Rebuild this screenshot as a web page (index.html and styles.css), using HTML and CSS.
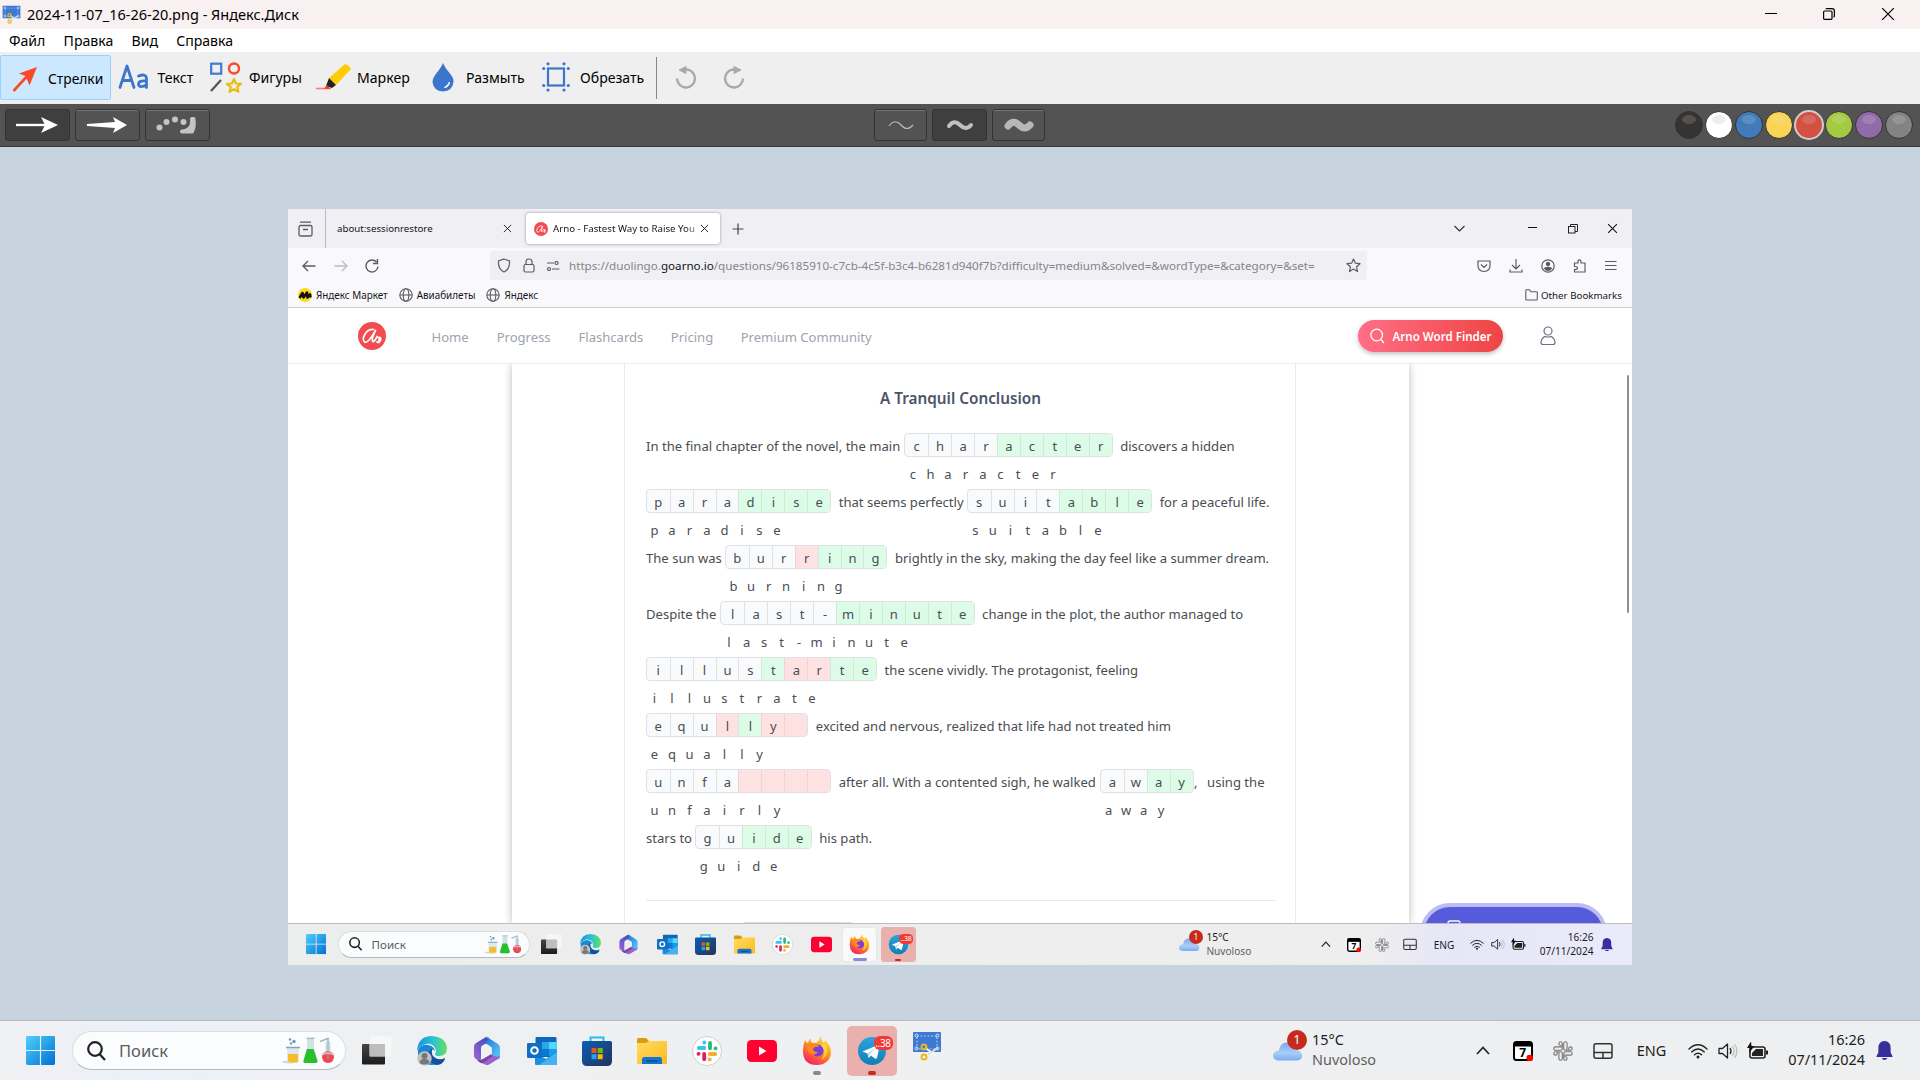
FILE: index.html
```html
<!DOCTYPE html>
<html lang="ru">
<head>
<meta charset="utf-8">
<title>2024-11-07_16-26-20.png - Яндекс.Диск</title>
<link rel="stylesheet" href="styles.css">
</head>
<body>
<svg class="defs" width="0" height="0">
  <defs>
    <linearGradient id="gWin" x1="0" y1="0" x2="1" y2="1"><stop offset="0" stop-color="#4fd0fb"/><stop offset="1" stop-color="#0070d4"/></linearGradient>
    <linearGradient id="gEdge" x1="0" y1="0" x2="1" y2="0"><stop offset="0" stop-color="#1496dc"/><stop offset=".55" stop-color="#2cc3d4"/><stop offset="1" stop-color="#66e05a"/></linearGradient>
    <linearGradient id="gTv" x1="0" y1="0" x2="0" y2="1"><stop offset="0" stop-color="#444"/><stop offset="1" stop-color="#1c1c1c"/></linearGradient>
    <linearGradient id="gFold" x1="0" y1="0" x2="1" y2="1"><stop offset="0" stop-color="#ffdc62"/><stop offset="1" stop-color="#fbbb1e"/></linearGradient>
    <linearGradient id="gStore" x1="0" y1="0" x2="1" y2="1"><stop offset="0" stop-color="#0a5fb4"/><stop offset="1" stop-color="#24325c"/></linearGradient>
    <linearGradient id="gFox" x1=".8" y1="0" x2=".2" y2="1"><stop offset="0" stop-color="#ffe443"/><stop offset=".45" stop-color="#ff9020"/><stop offset="1" stop-color="#f5156c"/></linearGradient>
    <linearGradient id="gTg" x1="0" y1="0" x2="0" y2="1"><stop offset="0" stop-color="#2ba4dc"/><stop offset="1" stop-color="#127fb8"/></linearGradient>
    <linearGradient id="gCloud" x1="0" y1="0" x2="0" y2="1"><stop offset="0" stop-color="#7ea6f0"/><stop offset=".6" stop-color="#a9cdf8"/><stop offset="1" stop-color="#7eaaf0"/></linearGradient>
    <linearGradient id="g365a" x1="0" y1="1" x2="1" y2="0"><stop offset="0" stop-color="#a566dc"/><stop offset="1" stop-color="#3a4bb4"/></linearGradient>
    <linearGradient id="g365b" x1="0" y1="0" x2="1" y2="1"><stop offset="0" stop-color="#1c6fd8"/><stop offset="1" stop-color="#5fd0fa"/></linearGradient>

    <symbol id="win" viewBox="0 0 30 30"><path fill="url(#gWin)" d="M1.500 0H14.400V14.400H0V1.500Q0 0 1.500 0zM15.600 0H28.500Q30 0 30 1.500V14.400H15.600zM0 15.600H14.400V30H1.500Q0 30 0 28.500zM15.600 15.600H30V28.500Q30 30 28.500 30H15.600z"/></symbol>
    <symbol id="flasks" viewBox="0 0 52 28">
      <ellipse cx="8" cy="25" rx="8" ry="1.500" fill="#c9d3da"/>
      <path d="M5 10h12v14q0 2-2 2H7q-2 0-2-2z" fill="#dbe9ef"/><path d="M6 17h10v7q0 1.500-2 1.500H8q-2 0-2-1.500z" fill="#f5bd2e"/><path d="M4 10.500h14" stroke="#7aa5ba" stroke-width="1.500"/>
      <g fill="#6a9bb4"><circle cx="8" cy="2.500" r="1.200"/><circle cx="12" cy="4.500" r="1.700"/><circle cx="9" cy="6.500" r="1.200"/></g>
      <path d="M25 1h7v10l4 13q0 2-2 2H23q-2 0-2-2l4-13z" fill="#cfe3e6"/><path d="M25 12h6.500l4 12q0 2-2 2H23q-2 0-1.500-2z" fill="#27c02c"/><path d="M24.500 1.200h8" stroke="#88aebc"/>
      <path d="M38 4.500l8-3v7" fill="none" stroke="#9bbccb" stroke-width="1.600"/><path d="M43.500 5h5v9h-5z" fill="#cadde5"/><circle cx="46" cy="20" r="6" fill="#f04652"/><path d="M40.500 17.500q5-3 11 0" stroke="#e9b6bd" stroke-width="2" fill="none"/><path d="M46 5v17" stroke="#8fb2c2"/>
    </symbol>
    <symbol id="taskview" viewBox="0 0 30 30"><rect x="0" y="8" width="23" height="20.500" rx="1" fill="url(#gTv)"/><rect x="7.500" y=".5" width="22" height="20" rx="1" fill="#f8f8f8" fill-opacity=".82"/><path d="M7.500 8H23V20.500H7.500z" fill="#b8b8b8" fill-opacity=".8"/></symbol>
    <symbol id="edge" viewBox="0 0 30 30">
      <path fill="#0f539f" d="M12 10Q5 17 12 25 17 31 24 28 28 25 28 22 22 25 17 21 13 17 16 12z"/>
      <path fill="#1b86d6" d="M1 14Q4 8 11 9 17 10 18 15 14 11 12 16 10 23 17 29 4 30 1 19z"/>
      <path fill="url(#gEdge)" d="M0 15Q1 0 15 0 29 1 30 12 30 20 22 20 18 20 18 18 20 15 18 12 15 7 9 8 3 9 0 15z"/>
      <circle cx="7.500" cy="22.500" r="7.200" fill="#c4c2c0"/><circle cx="7.500" cy="20" r="3" fill="#777"/><path d="M2.500 27q0-4 5-4t5 4q-5 3-10 0z" fill="#777"/>
    </symbol>
    <symbol id="m365" viewBox="0 0 30 30">
      <path fill="url(#g365a)" d="M14 1L4 7Q2 8 2 11v9q0 2 2 3l6 4q-2-2-1-5V12q0-2 2-3l6-3q1-3-3-5z"/>
      <path fill="url(#g365b)" d="M14 1q3 0 4 2l8 5q2 1 2 4v9q0 3-5 2l-3-2v-8q0-2-2-3l-5-3q5-3 1-7z"/>
      <path fill="#9b62cf" d="M28 19q0 3-2 4l-8 5q-3 2-6 0l-7-4q3 1 6-1l8-5 3 2q4 2 6-1z"/><path fill="#7a43a6" d="M5 24q3 1 6-1l8-4 2 1-10 7q-2 1-6-3z"/>
    </symbol>
    <symbol id="outlook" viewBox="0 0 30 30">
      <rect x="8.500" y="1" width="21" height="20" rx="1" fill="#1066b8"/><path fill="#28a8ea" d="M15 6h7v7h-7z"/><path fill="#50d9ff" d="M22 6h7.500v7H22z"/><path fill="#0a78d4" d="M15 13h7v7h-7z"/><path fill="#1a9be6" d="M22 13h7.500v7H22z"/>
      <path fill="#1a8ee2" d="M8 17l11 6 11-8v13q0 1-1 1H9q-1 0-1-1z"/><path fill="#45b3f0" d="M30 16v12q0 1-1 1H12z"/>
      <rect x="0" y="7" width="15" height="15" rx="1.200" fill="#0f6fc4"/><circle cx="7.500" cy="14.500" r="3.300" fill="none" stroke="#fff" stroke-width="2"/>
    </symbol>
    <symbol id="store" viewBox="0 0 30 30"><path d="M8.500 6V1.500h13V6" fill="none" stroke="#27bdf0" stroke-width="2"/><path fill="url(#gStore)" d="M1.500 5h27q1.500 0 1.500 1.500V25q0 5-5 5H5q-5 0-5-5V6.500Q0 5 1.500 5z"/><path fill="#f25022" d="M9.500 12h5v5h-5z"/><path fill="#7fba00" d="M15.700 12h5v5h-5z"/><path fill="#1aa7ee" d="M9.500 18.200h5v5h-5z"/><path fill="#ffb900" d="M15.700 18.200h5v5h-5z"/></symbol>
    <symbol id="folder" viewBox="0 0 30 30"><path fill="#dd9a0c" d="M0 3.500Q0 2 1.500 2H9l3.500 3.500V10H0z"/><path fill="url(#gFold)" d="M0 7h9l3-2h18v23H0z"/><path fill="#1373cf" d="M5 28v-4.500Q5 21 7.500 21h15q2.500 0 2.500 2.500V28z"/><path d="M10 25h10" stroke="#084d9a" stroke-width="1.500" stroke-linecap="round"/></symbol>
    <symbol id="slack" viewBox="0 0 30 30"><circle cx="15" cy="15" r="14.500" fill="#fff" stroke="#cfcfcf"/>
      <g stroke-width="3.800" stroke-linecap="round" fill="none"><path d="M6.800 12h5.500M12.300 6.400v.1" stroke="#36c5f0"/><path d="M18 6.800v5.500M23.500 12.300h.1" stroke="#2eb67d"/><path d="M17.800 18h5.500M17.800 23.500v.1" stroke="#ecb22e"/><path d="M12.200 17.800v5.500M6.500 17.800h.1" stroke="#e01e5a"/></g></symbol>
    <symbol id="youtube" viewBox="0 0 30 30"><rect y="4" width="30" height="22" rx="4.500" fill="#ff0033"/><path d="M12 10.500v9l7.500-4.500z" fill="#fff"/></symbol>
    <symbol id="firefox" viewBox="0 0 30 30">
      <path fill="url(#gFox)" d="M19 1q0 3 3 6 1-1 1-3 6 6 6 12 0 6-4 9.500T15 29Q1 29 1 15 1 9 3 4q1 3 3 3Q7 3 9 3q-1 4 3 4 5 0 6-6z"/>
      <circle cx="15.500" cy="14.500" r="6" fill="#7a3de0"/><path fill="#ff8a1c" d="M5 8q3-2 6-1 4 0 6 4-5-1-6 2 0 3 5 3-3 4-7 2-5-3-4-10z"/><path fill="#ffdf3e" d="M22 7q4 4 3 9-1 6-6 8 4-5 3-10-1-3-3-4z" opacity=".8"/>
    </symbol>
    <symbol id="telegram" viewBox="0 0 30 30"><circle cx="15" cy="15" r="14" fill="url(#gTg)"/><path fill="#fff" d="M5.500 15.500L21 9q2-.5 1.500 2l-2.500 10.500q-.6 2-2 1L14 19.500l-2.500 2.500-1-4.500z"/><path fill="#b5d7ea" d="M10.500 17.500l8.500-6-6.500 7-1 3.500z"/></symbol>
    <symbol id="yascreen" viewBox="0 0 30 30"><rect x="1" y="1" width="28" height="20" rx="1" fill="#3c78d4"/><path d="M5 5h20v13H5z" fill="none" stroke="#a8c8f4" stroke-dasharray="2 1.500"/><g fill="none" stroke="#dceafc"><circle cx="4.500" cy="4.500" r="1.500"/><circle cx="25.500" cy="4.500" r="1.500"/><circle cx="4.500" cy="17.500" r="1.500"/><circle cx="25.500" cy="17.500" r="1.500"/></g><path d="M13 16.500L25 26M14 25l11.500-8" stroke="#f5f5f5" stroke-width="2"/><path d="M16 23.500l9.500-6.500" stroke="#aaa" stroke-width=".6"/><g fill="none" stroke="#e6b91c" stroke-width="2"><circle cx="12" cy="16" r="2.500"/><circle cx="12" cy="26" r="2.500"/></g></symbol>
    <symbol id="cloud" viewBox="0 0 32 24"><path fill="url(#gCloud)" d="M7 22q-7 0-7-5 0-5 6-5Q8 2 16 3q7 1 8 8 7 1 7 6 0 5-6 5z"/></symbol>
    <symbol id="cal" viewBox="0 0 20 20"><rect x="1" y="1" width="18" height="18" rx="2.500" fill="#fff" stroke="#000" stroke-width="2"/><path d="M1 1h18v4.500H1z"/><text x="9.800" y="15.800" font-size="12" font-weight="700" text-anchor="middle" font-family="Noto Sans">7</text><circle cx="16.700" cy="17" r="3.300" fill="red"/></symbol>
    <symbol id="slackgray" viewBox="0 0 20 20"><g fill="none" stroke="#777" stroke-width="1.100"><path d="M9.300 6.300V2.500q0-1.700-1.700-1.700T5.900 2.500t1.700 1.700h1.700M6.300 10.700H2.500Q.8 10.700.8 12.400t1.700 1.700 1.700-1.700v-1.700M10.700 13.700v3.800q0 1.700 1.700 1.700t1.700-1.700-1.700-1.700h-1.700M13.700 9.300h3.800q1.700 0 1.700-1.700t-1.700-1.700-1.700 1.700v1.700"/><rect x="10.700" y=".8" width="3.400" height="8.500" rx="1.700"/><rect x="5.900" y="10.700" width="3.400" height="8.500" rx="1.700"/><rect x=".8" y="5.900" width="8.500" height="3.400" rx="1.700"/><rect x="10.700" y="10.700" width="8.500" height="3.400" rx="1.700"/></g></symbol>
    <symbol id="touchpad" viewBox="0 0 20 18"><path d="M3 1.700h14q2 0 2 2v10.600q0 2-2 2H3q-2 0-2-2V3.700q0-2 2-2zM1 10.500h18M10 10.500v6" fill="none" stroke="#333" stroke-width="1.500"/></symbol>
    <symbol id="wifi" viewBox="0 0 20 16"><g fill="none" stroke="#222" stroke-width="1.400" stroke-linecap="round"><path d="M1 6q9-8.500 18 0M3.700 8.900q6.300-5.800 12.600 0M6.500 11.700q3.500-3 7 0"/></g><circle cx="10" cy="14" r="1.500" fill="#222"/></symbol>
    <symbol id="speaker" viewBox="0 0 20 18"><path d="M1 6.500h3.500L9.500 2v14l-5-4.500H1z" fill="none" stroke="#222" stroke-width="1.300" stroke-linejoin="round"/><path d="M12 6q2 3 0 6" fill="none" stroke="#222" stroke-width="1.300"/><path d="M14.300 4q3.700 5 0 10M16.500 2q5 7 0 14" fill="none" stroke="#bbb" stroke-width="1.200"/></symbol>
    <symbol id="battery" viewBox="0 0 21 18"><rect x="3" y="5" width="15" height="11" rx="2" fill="none" stroke="#222" stroke-width="1.600"/><path d="M5 14v-3l4-4h7v7zM19 8.500h2v4h-2z" fill="#222"/><path d="M4-.5L0 6h3l-1 5 5.500-7H4.500z" fill="#111"/></symbol>
    <symbol id="bell" viewBox="0 0 18 20"><path fill="#382f9c" d="M9 0Q15.500.5 15.500 7v5L17.500 16v1H.5v-1L2.500 12V7Q2.500.5 9 0zM6 18h6q-1 2-3 2t-3-2z"/></symbol>
    <symbol id="arno" viewBox="0 0 28 28"><circle cx="14" cy="14" r="14" fill="#f24b50"/><path d="M15.500 7.500Q10 7 6.800 12.500T7 20.300Q10.500 21 17.500 8.500 13.500 16 14.500 19q1.500 2.200 4.500-4.500 1 1.800 3 1-1.800 3-1 5M22 15.500q1.800 1.500-.3 4-1.800 1.800-2.700.3" fill="none" stroke="#fff" stroke-width="1.700" stroke-linecap="round" stroke-linejoin="round"/></symbol>
    <symbol id="globe" viewBox="0 0 14 14"><g fill="none" stroke="#5b5b66" stroke-width="1.100"><circle cx="7" cy="7" r="6.200"/><ellipse cx="7" cy="7" rx="2.800" ry="6.200"/><path d="M.8 7h12.400"/></g></symbol>
    <symbol id="x" viewBox="0 0 10 10"><path d="M1 1l8 8M9 1L1 9" stroke="currentColor" fill="none"/></symbol>
  </defs>
</svg>

<header class="titlebar">
  <svg class="title-icon" viewBox="0 0 30 30"><use href="#yascreen"/></svg>
  <span class="title-text">2024-11-07_16-26-20.png - Яндекс.Диск</span>
  <div class="win-buttons">
    <svg width="12" height="12" viewBox="0 0 12 12"><path d="M0 5.500h12" stroke="#000"/></svg>
    <svg width="12" height="12" viewBox="0 0 12 12" fill="none" stroke="#000" stroke-width="1.200"><rect x=".6" y="3" width="8.400" height="8.400" rx="1"/><path d="M3 1.200Q3 .6 4 .6h5Q11.400.6 11.400 3v5q0 1-1 1"/></svg>
    <svg width="12" height="12" viewBox="0 0 12 12"><path d="M0 0l12 12M12 0L0 12" stroke="#000" stroke-width="1.200"/></svg>
  </div>
</header>
<nav class="menubar"><span>Файл</span><span>Правка</span><span>Вид</span><span>Справка</span></nav>

<div class="toolbar">
  <div class="tool tool-arrows">
    <svg width="28" height="28" viewBox="0 0 28 28"><path d="M2.500 26L19 8" stroke="#fa4a28" stroke-width="2.600"/><path d="M26 2L8 8.500l6.500 2.500 4 9.500z" fill="#fa4a28"/></svg><span>Стрелки</span>
  </div>
  <div class="tool tool-text">
    <svg width="31" height="28" viewBox="0 0 31 28"><g fill="none" stroke="#3c76cc" stroke-width="2.800" stroke-linecap="round" stroke-linejoin="round"><path d="M2 24.500L9 3l7 21.500M4.500 17.500h9"/><path d="M20.500 13q8-3 8 3v8.500M28.500 18q-8-1-8 3.500 1 4 8 .5"/></g></svg><span>Текст</span>
  </div>
  <div class="tool tool-shapes">
    <svg width="33" height="32" viewBox="0 0 33 32"><g fill="none"><rect x="2.200" y="2.700" width="10" height="10" stroke="#3f7bd4" stroke-width="2.200"/><circle cx="25" cy="7.500" r="5" stroke="#fa4a28" stroke-width="2.400"/><path d="M2 30L12 19" stroke="#555" stroke-width="2.300"/><path d="M25 18l2 4.500 5 .4-3.800 3.200 1.200 4.700L25 28.200l-4.400 2.600 1.200-4.700L18 22.900l5-.4z" stroke="#eabb10" stroke-width="2.200" stroke-linejoin="round"/></g></svg><span>Фигуры</span>
  </div>
  <div class="tool tool-marker">
    <svg width="37" height="28" viewBox="0 0 37 28"><path d="M1 25.500h15" stroke="#f77f72" stroke-width="1.600"/><path d="M30 1q4 1 6 5L21 22l-7-7z" fill="#ffcb05"/><path d="M14 15l7 7-4 3-6-2z" fill="#222"/><path d="M11.500 21.500l3.500 4-5.500.5z" fill="#f03a24"/></svg><span>Маркер</span>
  </div>
  <div class="tool tool-blur">
    <svg width="22" height="29" viewBox="0 0 22 29"><path d="M11 0q2 5 6.500 10T21.500 19q-1 9-10.500 9.500Q1.500 28 .5 19 .5 15 5 9.500T11 0z" fill="#3c76cc"/><path d="M17.500 19q-.5 5-5 5.500 3-1.500 5-5.500z" fill="#fff" stroke="#fff"/></svg><span>Размыть</span>
  </div>
  <div class="tool tool-crop">
    <svg width="28" height="30" viewBox="0 0 28 30"><rect x="6" y="6.500" width="16" height="17" fill="none" stroke="#3c76cc" stroke-width="2.200"/><g fill="#3c76cc"><circle cx="6" cy="1.800" r="1.600"/><circle cx="22" cy="1.800" r="1.600"/><circle cx="6" cy="28" r="1.600"/><circle cx="22" cy="28" r="1.600"/><circle cx="1.700" cy="6.500" r="1.600"/><circle cx="26.300" cy="6.500" r="1.600"/><circle cx="1.700" cy="23.500" r="1.600"/><circle cx="26.300" cy="23.500" r="1.600"/></g></svg><span>Обрезать</span>
  </div>
  <div class="tool-sep"></div>
  <svg class="history" width="22" height="24" viewBox="0 0 22 24"><path d="M2 12.500a9 9 0 1 0 10-9H10" fill="none" stroke="#a9a9a9" stroke-width="2.400"/><path d="M4 4L11 .5v7z" fill="#a9a9a9" stroke="#a9a9a9"/></svg>
  <svg class="history" width="22" height="24" viewBox="0 0 22 24"><path d="M20 12.500a9 9 0 1 1-10-9h2" fill="none" stroke="#a9a9a9" stroke-width="2.400"/><path d="M18 4L11 .5v7z" fill="#a9a9a9" stroke="#a9a9a9"/></svg>
</div>

<div class="options">
  <div class="arrow-kinds">
    <div class="opt active"><svg width="44" height="18" viewBox="0 0 44 18"><path d="M1 9h32" stroke="#fff" stroke-width="2.400"/><path d="M26 1l17 8-17 8 4-8z" fill="#fff"/></svg></div>
    <div class="opt"><svg width="44" height="18" viewBox="0 0 44 18"><path d="M2 8l28-2-2-5 14 8-14 8 2-5-28-2z" fill="#fff"/></svg></div>
    <div class="opt"><svg width="44" height="18" viewBox="0 0 44 18"><g fill="#c4c4c4"><circle cx="4.500" cy="11.500" r="3"/><circle cx="11.500" cy="6" r="3"/><circle cx="20" cy="3.500" r="3"/><circle cx="28.500" cy="6" r="3"/><path d="M35 2.500Q35 1 37 1h2q1.500 0 1.500 2 1 8-1.500 13-.5 1.500-2 1.500H27q-2 0-2-2t2-2 4-1q5-2 4-10z"/></g></svg></div>
  </div>
  <div class="stroke-kinds">
    <div class="opt"><svg width="32" height="16" viewBox="0 0 32 16"><path d="M4 9q6-8 12-1t12 0" fill="none" stroke="#bbb" stroke-width="1.200"/></svg></div>
    <div class="opt active"><svg width="32" height="16" viewBox="0 0 32 16"><path d="M5 9q5-7 11-1t11 0" fill="none" stroke="#c0c0c0" stroke-width="4" stroke-linecap="round"/></svg></div>
    <div class="opt"><svg width="32" height="16" viewBox="0 0 32 16"><path d="M5 9q5-7 11-1t11 0" fill="none" stroke="#b8b8b8" stroke-width="7" stroke-linecap="round"/></svg></div>
  </div>
  <div class="palette"><i class="c-black"></i><i class="c-white"></i><i class="c-blue"></i><i class="c-yellow"></i><i class="c-red"></i><i class="c-green"></i><i class="c-purple"></i><i class="c-gray"></i></div>
</div>

<main class="canvas">
  <section class="shot">
    <div class="tabs">
      <div class="recent"><svg width="15" height="16" viewBox="0 0 15 16" fill="none" stroke="#5b5b66" stroke-width="1.300"><rect x="1" y="4.500" width="13" height="10.500" rx="1.500"/><path d="M2 1.200h11M5 8.500h5"/></svg></div>
      <div class="tab tab-idle"><span>about:sessionrestore</span><svg width="9" height="9"><use href="#x"/></svg></div>
      <div class="tab tab-active"><svg width="14" height="14"><use href="#arno"/></svg><span class="tab-title">Arno - Fastest Way to Raise You</span><svg width="9" height="9"><use href="#x"/></svg></div>
      <svg class="newtab" width="12" height="12" viewBox="0 0 12 12"><path d="M6 .5v11M.5 6h11" stroke="#444" stroke-width="1.200"/></svg>
      <div class="shot-win">
        <svg width="11" height="11" viewBox="0 0 11 11"><path d="M.5 3l5 5 5-5" fill="none" stroke="#333" stroke-width="1.200"/></svg>
        <svg width="9" height="9" viewBox="0 0 9 9"><path d="M0 3.500h9" stroke="#111"/></svg>
        <svg width="10" height="10" viewBox="0 0 10 10" fill="none" stroke="#222"><rect x=".5" y="2.500" width="6.500" height="6.500"/><path d="M2.500 2.500v-2H9.500v7H7"/></svg>
        <svg width="11" height="11"><use href="#x"/></svg>
      </div>
    </div>
    <div class="navbar">
      <div class="nav-left">
        <svg width="14" height="12" viewBox="0 0 14 12" fill="none" stroke="#5b5b66" stroke-width="1.400"><path d="M13.500 6H1M6 1L1 6l5 5"/></svg>
        <svg width="14" height="12" viewBox="0 0 14 12" fill="none" stroke="#bbb" stroke-width="1.300"><path d="M.5 6H13M8 1l5 5-5 5"/></svg>
        <svg width="14" height="14" viewBox="0 0 14 14" fill="none" stroke="#5b5b66" stroke-width="1.400"><path d="M11.500 3A6 6 0 1 0 13 7.500M12.500 0v4.500H8"/></svg>
      </div>
      <div class="urlbar">
        <svg width="14" height="15" viewBox="0 0 14 15" fill="none" stroke="#5b5b66" stroke-width="1.200"><path d="M7 1l5.500 2q.7 8-5.500 11Q.8 11 1.500 3z"/></svg>
        <svg width="12" height="15" viewBox="0 0 12 15" fill="none" stroke="#5b5b66" stroke-width="1.200"><rect x="1" y="6.500" width="10" height="7.500" rx="1.500"/><path d="M3 6.500V4q0-3 3-3t3 3v2.500"/></svg>
        <svg width="14" height="10" viewBox="0 0 14 10" fill="none" stroke="#5b5b66" stroke-width="1.200"><path d="M1 2h7M6 8h7.500"/><circle cx="10.500" cy="2" r="1.500"/><circle cx="3" cy="8" r="1.500"/></svg>
        <span class="url">https://duolingo.<b>goarno.io</b>/questions/96185910-c7cb-4c5f-b3c4-b6281d940f7b?difficulty=medium&amp;solved=&amp;wordType=&amp;category=&amp;set=</span>
        <svg class="star" width="15" height="15" viewBox="0 0 15 15" fill="none" stroke="#5b5b66" stroke-width="1.200" stroke-linejoin="round"><path d="M7.500 1l1.900 4.200 4.600.5-3.400 3.100.9 4.700-4-2.400-4 2.400.9-4.700L1 5.700l4.600-.5z"/></svg>
      </div>
      <div class="nav-right">
        <svg width="14" height="14" viewBox="0 0 14 14" fill="none" stroke="#5b5b66" stroke-width="1.200"><path d="M1 2h12v4.500q0 5.500-6 6-6-.5-6-6zM4 5.500l3 3 3-3"/></svg>
        <svg width="14" height="14" viewBox="0 0 14 14" fill="none" stroke="#5b5b66" stroke-width="1.200"><path d="M7 0v9.500M3 6l4 4 4-4M1 10.500V13h12v-2.500"/></svg>
        <svg width="14" height="14" viewBox="0 0 14 14"><circle cx="7" cy="7" r="6.200" fill="none" stroke="#5b5b66" stroke-width="1.200"/><circle cx="7" cy="5" r="2.200" fill="#5b5b66"/><path d="M3 9.500q0-1.800 4-1.800t4 1.800Q9.500 12 7 12T3 9.500z" fill="#5b5b66"/></svg>
        <svg width="14" height="14" viewBox="0 0 14 14" fill="none" stroke="#5b5b66" stroke-width="1.200"><path d="M1.500 4h3.500V2.500q0-1.700 1.500-1.700T8 2.500V4h4v9H1.500v-2.500q3 0 3-1.500t-3-1.500z"/></svg>
        <svg width="12" height="12" viewBox="0 0 12 12"><path d="M0 1.500h11.500M0 5.500h11.500M0 9.500h11.500" stroke="#5b5b66" stroke-width="1.200"/></svg>
      </div>
    </div>
    <div class="bookmarks">
      <svg width="14" height="14" viewBox="0 0 14 14"><circle cx="7" cy="7" r="7" fill="#fcdb1c"/><path d="M1.500 10L4.500 5l1 4.500 3.500-5 .5 5 2.500-3 .5 3" fill="none" stroke="#111" stroke-width="2.600" stroke-linejoin="round"/></svg><span class="bm1">Яндекс Маркет</span>
      <svg width="14" height="14"><use href="#globe"/></svg><span class="bm2">Авиабилеты</span>
      <svg width="14" height="14"><use href="#globe"/></svg><span>Яндекс</span>
      <div class="other"><svg width="13" height="12" viewBox="0 0 13 12" fill="none" stroke="#5b5b66" stroke-width="1.100"><path d="M.8 10V1.500Q.8.800 1.500.8h3l1.500 2h5.500q.8 0 .8.700V10q0 1-1 1h-9.500q-1 0-1-1z"/></svg><span>Other Bookmarks</span></div>
    </div>
    <div class="site-head">
      <svg class="logo" width="28" height="28"><use href="#arno"/></svg>
      <span class="n1">Home</span><span class="n2">Progress</span><span class="n3">Flashcards</span><span class="n4">Pricing</span><span>Premium Community</span>
      <div class="finder"><svg width="15" height="16" viewBox="0 0 15 16" fill="none" stroke="#fff" stroke-width="1.300"><circle cx="6.700" cy="7" r="5.800"/><path d="M11 11.500l3 3.500"/></svg><span>Arno Word Finder</span></div>
      <svg class="user" width="16" height="20" viewBox="0 0 16 20" fill="none" stroke="#6b7280" stroke-width="1.200"><circle cx="8" cy="5" r="4"/><path d="M4.500 10.500q-3.500 2.500-3.500 6 0 2 2 2h10q2 0 2-2 0-3.500-3.500-6-3.500 1-7 0z"/></svg>
    </div>
    <div class="page">
      <div class="sheet">
        <div class="card">
          <h1>A Tranquil Conclusion</h1>
          <div class="line"><span>In the final chapter of the novel, the main</span><div class="word"><div class="cells"><i>c</i><i>h</i><i>a</i><i>r</i><i class="g">a</i><i class="g">c</i><i class="g">t</i><i class="g">e</i><i class="g">r</i></div><div class="answer"><i>c</i><i>h</i><i>a</i><i>r</i><i>a</i><i>c</i><i>t</i><i>e</i><i>r</i></div></div><span>discovers a hidden</span></div>
          <div class="line"><div class="word"><div class="cells"><i>p</i><i>a</i><i>r</i><i>a</i><i class="g">d</i><i class="g">i</i><i class="g">s</i><i class="g">e</i></div><div class="answer"><i>p</i><i>a</i><i>r</i><i>a</i><i>d</i><i>i</i><i>s</i><i>e</i></div></div><span>that seems perfectly</span><div class="word tight"><div class="cells"><i>s</i><i>u</i><i>i</i><i>t</i><i class="g">a</i><i class="g">b</i><i class="g">l</i><i class="g">e</i></div><div class="answer"><i>s</i><i>u</i><i>i</i><i>t</i><i>a</i><i>b</i><i>l</i><i>e</i></div></div><span>for a peaceful life.</span></div>
          <div class="line"><span>The sun was</span><div class="word tight"><div class="cells"><i>b</i><i>u</i><i>r</i><i class="r">r</i><i class="g">i</i><i class="g">n</i><i class="g">g</i></div><div class="answer"><i>b</i><i>u</i><i>r</i><i>n</i><i>i</i><i>n</i><i>g</i></div></div><span>brightly in the sky, making the day feel like a summer dream.</span></div>
          <div class="line"><span>Despite the</span><div class="word"><div class="cells"><i>l</i><i>a</i><i>s</i><i>t</i><i>-</i><i class="g">m</i><i class="g">i</i><i class="g">n</i><i class="g">u</i><i class="g">t</i><i class="g">e</i></div><div class="answer"><i>l</i><i>a</i><i>s</i><i>t</i><i>-</i><i>m</i><i>i</i><i>n</i><i>u</i><i>t</i><i>e</i></div></div><span>change in the plot, the author managed to</span></div>
          <div class="line"><div class="word"><div class="cells"><i>i</i><i>l</i><i>l</i><i>u</i><i>s</i><i class="g">t</i><i class="r">a</i><i class="r">r</i><i class="g">t</i><i class="g">e</i></div><div class="answer"><i>i</i><i>l</i><i>l</i><i>u</i><i>s</i><i>t</i><i>r</i><i>a</i><i>t</i><i>e</i></div></div><span>the scene vividly. The protagonist, feeling</span></div>
          <div class="line"><div class="word"><div class="cells"><i>e</i><i>q</i><i>u</i><i class="r">l</i><i class="g">l</i><i class="r">y</i><i class="r"></i></div><div class="answer"><i>e</i><i>q</i><i>u</i><i>a</i><i>l</i><i>l</i><i>y</i></div></div><span>excited and nervous, realized that life had not treated him</span></div>
          <div class="line"><div class="word"><div class="cells"><i>u</i><i>n</i><i>f</i><i>a</i><i class="r"></i><i class="r"></i><i class="r"></i><i class="r"></i></div><div class="answer"><i>u</i><i>n</i><i>f</i><i>a</i><i>i</i><i>r</i><i>l</i><i>y</i></div></div><span>after all. With a contented sigh, he walked</span><div class="word"><div class="cells"><i>a</i><i>w</i><i class="g">a</i><i class="g">y</i></div><div class="answer"><i>a</i><i>w</i><i>a</i><i>y</i></div></div><span class="comma">,</span><span>using the</span></div>
          <div class="line"><span>stars to</span><div class="word tight"><div class="cells"><i>g</i><i>u</i><i class="g">i</i><i class="g">d</i><i class="g">e</i></div><div class="answer"><i>g</i><i>u</i><i>i</i><i>d</i><i>e</i></div></div><span>his path.</span></div>
          <hr>
          <div class="stub"></div>
        </div>
      </div>
      <div class="scroll"></div>
      <div class="cta"><svg width="14" height="12" viewBox="0 0 14 12"><path d="M1 10V3q0-2 2-2h8q2 0 2 2v7" fill="none" stroke="#fff" stroke-width="1.300"/></svg></div>
    </div>
    <footer class="taskbar inner">
      <svg class="start"><use href="#win"/></svg>
      <div class="search"><svg width="19" height="20" viewBox="0 0 19 20" fill="none" stroke="#222" stroke-width="2.200"><circle cx="8" cy="8" r="6.800"/><path d="M12.500 13l5.500 6"/></svg><span>Поиск</span><svg class="flasks"><use href="#flasks"/></svg></div>
      <div class="apps">
        <div class="app"><svg><use href="#taskview"/></svg></div><div class="app"><svg><use href="#edge"/></svg></div><div class="app"><svg><use href="#m365"/></svg></div><div class="app"><svg><use href="#outlook"/></svg></div><div class="app"><svg><use href="#store"/></svg></div><div class="app"><svg><use href="#folder"/></svg></div><div class="app"><svg><use href="#slack"/></svg></div><div class="app"><svg><use href="#youtube"/></svg></div><div class="app focus"><svg><use href="#firefox"/></svg><b class="mark"></b></div><div class="app alert"><svg><use href="#telegram"/></svg><b class="count">..38</b><b class="mark"></b></div>
      </div>
      <div class="tray">
        <div class="weather"><svg class="cl"><use href="#cloud"/></svg><b class="one">1</b><p>15°C<br><em>Nuvoloso</em></p></div>
        <div class="t40"><svg width="14" height="9" viewBox="0 0 14 9"><path d="M1 8l6-6.500L13 8" fill="none" stroke="#222" stroke-width="1.700"/></svg></div>
        <div class="t40"><svg width="20" height="20"><use href="#cal"/></svg></div><div class="t40"><svg width="20" height="20"><use href="#slackgray"/></svg></div><div class="t40"><svg width="20" height="18"><use href="#touchpad"/></svg></div>
        <div class="lang">ENG</div><div class="wifi"><svg width="20" height="16"><use href="#wifi"/></svg></div><div class="vol"><svg width="20" height="18"><use href="#speaker"/></svg></div><div class="bat"><svg width="21" height="18"><use href="#battery"/></svg></div>
        <div class="clock">16:26<br>07/11/2024</div><div class="bell"><svg width="17" height="19"><use href="#bell"/></svg></div>
      </div>
    </footer>
  </section>
</main>

<footer class="taskbar">
  <svg class="start"><use href="#win"/></svg>
  <div class="search"><svg width="19" height="20" viewBox="0 0 19 20" fill="none" stroke="#222" stroke-width="2.200"><circle cx="8" cy="8" r="6.800"/><path d="M12.500 13l5.500 6"/></svg><span>Поиск</span><svg class="flasks"><use href="#flasks"/></svg></div>
  <div class="apps">
    <div class="app"><svg><use href="#taskview"/></svg></div><div class="app"><svg><use href="#edge"/></svg></div><div class="app"><svg><use href="#m365"/></svg></div><div class="app"><svg><use href="#outlook"/></svg></div><div class="app"><svg><use href="#store"/></svg></div><div class="app"><svg><use href="#folder"/></svg></div><div class="app"><svg><use href="#slack"/></svg></div><div class="app"><svg><use href="#youtube"/></svg></div><div class="app"><svg><use href="#firefox"/></svg><b class="mark"></b></div><div class="app alert"><svg><use href="#telegram"/></svg><b class="count">..38</b><b class="mark"></b></div><div class="app raised"><svg><use href="#yascreen"/></svg></div>
  </div>
  <div class="tray">
    <div class="weather"><svg class="cl"><use href="#cloud"/></svg><b class="one">1</b><p>15°C<br><em>Nuvoloso</em></p></div>
    <div class="t40"><svg width="14" height="9" viewBox="0 0 14 9"><path d="M1 8l6-6.500L13 8" fill="none" stroke="#222" stroke-width="1.700"/></svg></div>
    <div class="t40"><svg width="20" height="20"><use href="#cal"/></svg></div><div class="t40"><svg width="20" height="20"><use href="#slackgray"/></svg></div><div class="t40"><svg width="20" height="18"><use href="#touchpad"/></svg></div>
    <div class="lang">ENG</div><div class="wifi"><svg width="20" height="16"><use href="#wifi"/></svg></div><div class="vol"><svg width="20" height="18"><use href="#speaker"/></svg></div><div class="bat"><svg width="21" height="18"><use href="#battery"/></svg></div>
    <div class="clock">16:26<br>07/11/2024</div><div class="bell"><svg width="17" height="19"><use href="#bell"/></svg></div>
  </div>
</footer>
</body>
</html>
```
FILE: styles.css
```css
* { box-sizing: border-box; }
body { margin: 0; width: 1920px; height: 1080px; overflow: hidden; display: flex; flex-direction: column; font-family: "Noto Sans", sans-serif; color: #000; }
i, em { font-style: normal; }
svg { flex: none; display: block; }
span { white-space: nowrap; }
.defs { position: absolute; }

/* window chrome */
.titlebar { height: 29px; background: #f9f0f1; display: flex; align-items: center; padding-left: 2px; flex: none; }
.title-icon { width: 19px; height: 19px; }
.title-text { font-size: 14.5px; margin-left: 6px; padding-bottom: 2px; }
.win-buttons { margin-left: auto; display: flex; gap: 46px; padding: 0 26px 1px 0; }
.win-buttons svg:last-child { margin-left: 1px; }
.menubar { height: 23px; flex: none; background: #fff; display: flex; align-items: center; padding-left: 9px; gap: 18.200px; font-size: 14.1px; }
.menubar span { line-height: 20px; padding-top: 1px; }

.toolbar { height: 52px; flex: none; background: #efefef; display: flex; align-items: center; font-size: 14.1px; }
.tool { height: 45px; margin-bottom: 2px; display: flex; align-items: center; }
.tool-arrows { width: 111px; padding-left: 10px; gap: 9px; background: #cce8ff; border: 1px solid #99d1ff; border-radius: 2px; padding-top: 3px; font-size: 13.8px; }
.tool-text { width: 95px; padding-left: 7px; gap: 8.500px; }
.tool-shapes { width: 104px; padding-left: 3px; gap: 7px; }
.tool-marker { width: 118px; padding-left: 5px; gap: 5px; }
.tool-blur { width: 110px; padding-left: 4px; gap: 12px; }
.tool-crop { width: 118px; padding-left: 4px; gap: 10px; }
.tool-sep { width: 1px; height: 42px; background: #888; margin-right: 18px; }
.history { margin-right: 26px; }

.options { height: 43px; flex: none; background: #535353; border-bottom: 1px solid #3b3b3b; display: flex; align-items: center; }
.arrow-kinds { width: 874px; display: flex; gap: 5px; padding-left: 4.500px; }
.arrow-kinds .opt { width: 65px; }
.stroke-kinds { display: flex; gap: 5px; }
.stroke-kinds .opt { width: 53px; }
.stroke-kinds .opt.active { width: 55px; }
.opt { height: 32px; border: 1px solid #333; border-radius: 3px; display: flex; align-items: center; justify-content: center; box-shadow: inset 0 1px #777; }
.opt.active { background: #3f3f3f; box-shadow: none; }
.palette { margin-left: auto; display: flex; align-items: center; gap: 2px; padding-right: 7px; }
.palette i { width: 28px; height: 28px; border-radius: 50%; border: 1px solid #333; background: radial-gradient(ellipse 7px 4.500px at 50% 29%, rgba(235,235,235,.16) 95%, transparent 100%) var(--c); }
.c-black { --c: #353432; } .c-white { --c: #fff; } .c-blue { --c: #417bb9; } .c-yellow { --c: #f9d455; }
.c-red { --c: #d25143; } .c-green { --c: #a4ca42; } .c-purple { --c: #916ba9; } .c-gray { --c: #838383; }
.palette .c-white { background: radial-gradient(ellipse 7px 4.500px at 50% 29%, #eee 95%, transparent 100%) #fff; }
.palette .c-red { width: 30px; height: 30px; border: 2px solid #d2cdcc; margin: 0 -1px; }

/* opened picture */
.canvas { flex: 1; background: #c7d3de; padding: 62px 288px 0; }
.shot { width: 1344px; height: 756px; display: flex; flex-direction: column; background: #fff; overflow: hidden; }
.tabs { height: 39px; flex: none; background: #f0eff4; display: flex; align-items: center; font-size: 9.700px; color: #15141a; }
.recent { width: 38px; height: 39px; border-right: 1px solid #bbbac2; padding: 12px 0 0 10px; }
.tab { height: 31px; display: flex; align-items: center; }
.tab-idle { width: 200px; padding: 0 14px 0 11px; justify-content: space-between; }
.tab-active { width: 194px; background: #fff; border-radius: 3px; box-shadow: 0 0 3px rgba(0,0,0,.4); padding-left: 8px; font-size: 9.700px; }
.tab-title { width: 147px; margin: 0 0 0 5px; -webkit-mask: linear-gradient(90deg, #000 132px, rgba(0,0,0,.3) 147px); mask: linear-gradient(90deg, #000 132px, rgba(0,0,0,.3) 147px); }
.newtab { margin-left: 12px; }
.shot-win { margin-left: auto; display: flex; align-items: center; padding-right: 14px; }
.shot-win svg:nth-child(1) { margin-right: 63px; }
.shot-win svg:nth-child(2) { margin-right: 31px; }
.shot-win svg:nth-child(3) { margin-right: 29px; }
.navbar { height: 36px; flex: none; background: #f9f9fb; display: flex; align-items: center; padding-bottom: 1px; }
.nav-left { width: 202px; padding-left: 14px; display: flex; align-items: center; gap: 17.500px; }
.urlbar { width: 877px; height: 29px; border-radius: 3px; background: #f0f0f4; display: flex; align-items: center; padding-left: 7px; }
.urlbar svg:nth-child(2) { margin: 0 11px 0 12px; }
.url { margin-left: 9px; font-size: 11.630px; color: #85848c; }
.url b { font-weight: 400; color: #15141a; }
.star { margin-left: auto; margin-right: 6px; }
.nav-right { margin-left: auto; display: flex; align-items: center; gap: 18px; padding-right: 15px; }
.bookmarks { height: 24px; flex: none; background: #f9f9fb; border-bottom: 1px solid #cfcfd6; display: flex; align-items: center; padding: 0 10px 1px 10px; font-size: 9.900px; color: #15141a; }
.bookmarks span { margin-left: 4px; }
.bookmarks .bm1, .bookmarks .bm2 { margin-right: 11px; }
.other { margin-left: auto; display: flex; align-items: center; font-size: 9.750px; }
.other span { margin-left: 3px; }

.site-head { height: 56px; flex: none; background: #fff; border-bottom: 1px solid #eceef1; display: flex; align-items: center; font-size: 13.050px; color: #9ca3af; }
.site-head span { padding-top: 2px; }
.logo { margin: 0 45.500px 0 70px; }
.n1 { margin-right: 28px; } .n2 { margin-right: 28px; } .n3 { margin-right: 27.500px; } .n4 { margin-right: 27.500px; }
.finder { margin-left: auto; width: 145px; height: 32px; border-radius: 16px; background: linear-gradient(90deg, #ff6f87, #ef4444); box-shadow: 0 2px 4px rgba(0,0,0,.25); color: #fff; font-size: 11.550px; font-weight: 600; display: flex; align-items: center; gap: 8px; padding-left: 11.500px; }
.user { margin: 0 76px 0 37px; }
.page { flex: 1; min-height: 0; position: relative; overflow: hidden; }
.sheet { width: 897px; height: 560px; margin-left: 224px; box-shadow: 0 0 8px rgba(0,0,0,.28); }
.card { width: 672px; height: 100%; margin-left: 112px; border: solid #e8eaef; border-width: 0 1px; padding: 21px 20px 0 21px; color: #4a4d52; }
h1 { margin: 0 0 21px; font-size: 15.300px; font-weight: 600; line-height: 26px; height: 27px; color: #4a5568; text-align: center; }
.line { display: flex; height: 56px; }
.line > span { font-size: 13.080px; line-height: 26px; height: 24px; }
.word { margin: 0 7.500px 0 4px; }
.word.tight { margin-left: 3px; }
.word:first-child { margin-left: -.3px; }
.line > .comma { margin: 0 7px 0 -7px; width: 6px; }
.cells { display: flex; width: max-content; height: 24px; border: 1px solid #dfe1e5; border-radius: 4px; overflow: hidden; background: #f9fafb; }
.cells i { width: 22.950px; border-left: 1px solid #e1e4e6; text-align: center; font-size: 13px; line-height: 24px; }
.cells i:first-child { border-left: 0; }
.cells .g { background: #dcfce7; border-color: #cdebd8; }
.cells .r { background: #fee2e2; border-color: #eed3d5; }
.answer { display: flex; margin-top: 5px; width: 0; }
.answer i { flex: none; width: 17.500px; text-align: center; font-size: 13px; line-height: 24px; }
hr { border: 0; border-top: 1px solid #e5e9ef; margin: 19px 0 21px; }
.stub { width: 111px; height: 8px; margin-left: 96px; background: #f5f5f5; border: 1px solid #ddd; border-radius: 3px; }
.scroll { position: absolute; right: 3px; top: 11px; width: 2px; height: 238px; background: #8f8f96; border-radius: 1px; }
.cta { position: absolute; left: 1132px; top: 539px; width: 187px; height: 60px; border-radius: 30px; background: #565bdc; border: 4px solid #bbbdf2; padding: 13px 0 0 23px; }

/* taskbar */
.taskbar { height: 60px; width: 1920px; flex: none; background: linear-gradient(90deg, #eff0f2 0, #ecf0f8 150px, #eff0f2 360px, #eeeff0 100%); border-top: 1px solid #b6b9bf; display: flex; align-items: center; padding-left: 26px; }
.inner { zoom: .7; background: linear-gradient(90deg, #eceded 0, #efeeee 1540px, #e6e6f7 1660px, #ebeafa 1920px); border-top: 1.500px solid #bdbdbd; }
.start { width: 29px; height: 29px; margin-right: 17px; }
.search { width: 274px; height: 39px; border-radius: 20px; background: #fbfcfd; border: 1px solid #dcdee1; border-bottom-color: #b5b8bc; display: flex; align-items: center; padding-left: 14px; font-size: 16.500px; color: #5c5c5c; }
.search span { margin-left: 13px; }
.flasks { width: 52px; height: 28px; margin: 0 11px 0 auto; }
.apps { display: flex; margin-left: 3px; }
.app { width: 55px; height: 50px; display: flex; align-items: center; justify-content: center; position: relative; }
.app > svg { width: 30px; height: 30px; }
.app .mark { position: absolute; bottom: 1px; left: 24px; width: 8px; height: 4px; border-radius: 2px; background: #8a8a8a; }
.alert, .focus { width: 50px; margin: 0 2.500px; border-radius: 5px; background: #e9b0ad; }
.focus { background: #fafafa; border: 1px solid #e6e6e6; }
.alert .mark { background: #c42b1c; left: 21px; }
.focus .mark { background: #8b8ad8; width: 20px; left: 14px; bottom: 0; }
.count { position: absolute; top: 10px; right: 4px; width: 19px; height: 14px; border-radius: 6px; background: #f03a38; color: #fff; font: 400 10px/14px "Noto Sans", sans-serif; text-align: center; letter-spacing: -.3px; }
.raised { padding-bottom: 9px; }
.tray { margin-left: auto; width: 647px; display: flex; align-items: center; font-size: 14.450px; color: #1c1c1c; }
.tray > div { display: flex; justify-content: center; align-items: center; }
.tray > .weather { width: 190px; justify-content: flex-start; position: relative; }
.cl { width: 30px; height: 24px; }
.weather p { margin: 0 0 1px 9px; line-height: 20.500px; }
.weather em { color: #5e5e5e; }
.one { position: absolute; left: 14px; top: 0; width: 20px; height: 20px; border-radius: 50%; background: #c42b1c; color: #fff; font-size: 12px; font-weight: 400; line-height: 20px; text-align: center; }
.t40 { width: 40px; }
.lang { width: 57px; }
.wifi { width: 36px; }
.vol { width: 24px; }
.bat { width: 35px; }
.tray > .clock { width: 90px; display: block; text-align: right; line-height: 20.500px; padding-bottom: 1px; }
.bell { width: 38px; }
```
